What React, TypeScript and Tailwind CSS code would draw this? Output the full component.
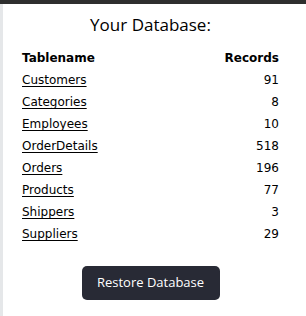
import React from 'react';

const tables: { name: string; records: number }[] = [
  { name: 'Customers', records: 91 },
  { name: 'Categories', records: 8 },
  { name: 'Employees', records: 10 },
  { name: 'OrderDetails', records: 518 },
  { name: 'Orders', records: 196 },
  { name: 'Products', records: 77 },
  { name: 'Shippers', records: 3 },
  { name: 'Suppliers', records: 29 },
];

export default function App() {
  return (
    <div className="flex h-[316px] w-[306px] flex-col bg-white">
      <div className="h-[4px] bg-[#2e2e2e]" />
      <div className="flex flex-1">
        <div className="w-[3px] bg-[#e5e7e9]" />
        <div className="flex flex-1 flex-col pl-[19px] pr-[27px]">
          <h2 className="mt-[9px] text-center font-['Open_Sans',sans-serif] text-[17px] leading-[24px] font-normal text-black">
            Your Database:
          </h2>

          <table className="mt-[10px] w-full border-collapse font-['DejaVu_Sans',Verdana,sans-serif] text-[12px] text-black">
            <thead>
              <tr className="h-[22px]">
                <th className="p-0 text-left font-bold">Tablename</th>
                <th className="p-0 text-right font-bold">Records</th>
              </tr>
            </thead>
            <tbody>
              {tables.map((t) => (
                <tr key={t.name} className="h-[22px]">
                  <td className="p-0 text-left">
                    <a href="#" className="text-black underline underline-offset-2">
                      {t.name}
                    </a>
                  </td>
                  <td className="p-0 text-right">{t.records}</td>
                </tr>
              ))}
            </tbody>
          </table>

          <div className="mt-[21px] flex justify-center">
            <button
              type="button"
              className="h-[34px] w-[138px] rounded-[5px] bg-[#282a35] font-['Open_Sans',sans-serif] text-[13px] text-white"
            >
              Restore Database
            </button>
          </div>
        </div>
      </div>
    </div>
  );
}
